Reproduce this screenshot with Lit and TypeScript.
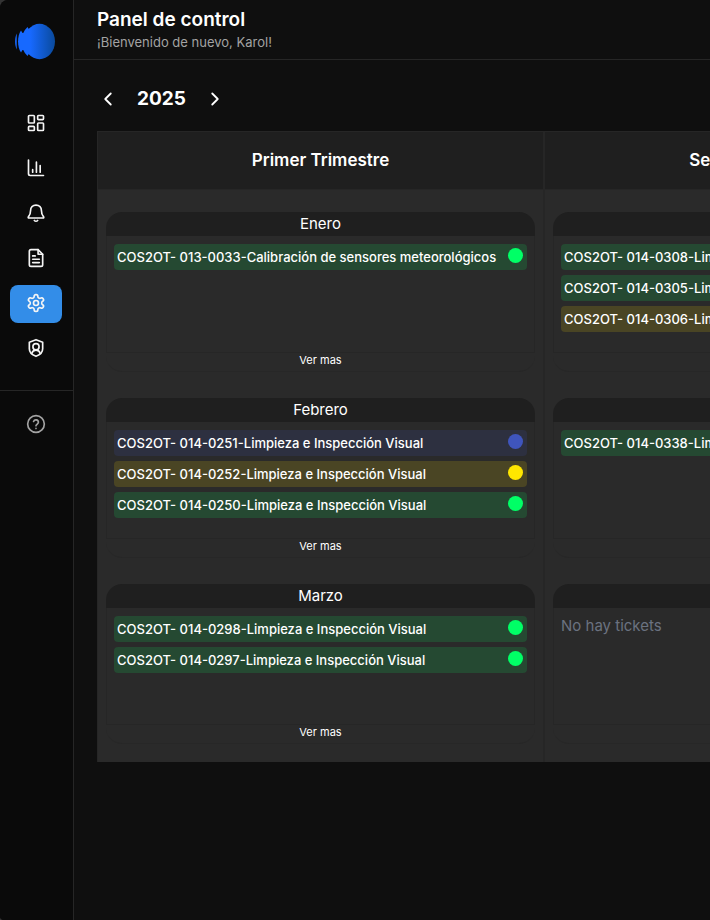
import { LitElement, html, css, svg } from "lit";
import { customElement, property, state } from "lit/decorators.js";
import { classMap } from "lit/directives/class-map.js";

type Status = "done" | "pending" | "open";
interface Ticket {
  code: string;
  title: string;
  status: Status;
}
interface Month {
  name: string;
  tickets: Ticket[];
}
interface Quarter {
  name: string;
  months: Month[];
}

const VISUAL = "Limpieza e Inspección Visual";
const ticket = (code: string, status: Status = "done", title = VISUAL): Ticket => ({ code, title, status });

const QUARTERS: Quarter[] = [
  {
    name: "Primer Trimestre",
    months: [
      { name: "Enero", tickets: [ticket("013-0033", "done", "Calibración de sensores meteorológicos")] },
      {
        name: "Febrero",
        tickets: [ticket("014-0251", "open"), ticket("014-0252", "pending"), ticket("014-0250")],
      },
      { name: "Marzo", tickets: [ticket("014-0298"), ticket("014-0297")] },
    ],
  },
  {
    name: "Segundo Trimestre",
    months: [
      {
        name: "Abril",
        tickets: [ticket("014-0308"), ticket("014-0305"), ticket("014-0306", "pending")],
      },
      { name: "Mayo", tickets: [ticket("014-0338")] },
      { name: "Junio", tickets: [] },
    ],
  },
];

const ICONS = {
  dashboard: svg`<rect x="3" y="3" width="7" height="9" rx="1"/><rect x="14" y="3" width="7" height="5" rx="1"/><rect x="14" y="12" width="7" height="9" rx="1"/><rect x="3" y="16" width="7" height="5" rx="1"/>`,
  chart: svg`<path d="M3 2.5v16.500a2 2 0 0 0 2 2h16"/><path d="M8 17v-3M12.500 17V5M17 17V9"/>`,
  bell: svg`<path d="M12 2.500c-4 0-6.500 3-6.500 6.500 0 4-.8 5.600-2.600 7.600-.5.600-.2 1.400.6 1.400h17c.8 0 1.100-.8.6-1.400-1.800-2-2.600-3.600-2.600-7.600 0-3.500-2.500-6.500-6.500-6.500z"/><path d="M10 21c1 1 3 1 4 0"/>`,
  file: svg`<path d="M14.500 2H6a2 2 0 0 0-2 2v16a2 2 0 0 0 2 2h12a2 2 0 0 0 2-2V7.500z"/><path d="M14.500 2v5.500H20M8 9.500h3M8 13.500h8M8 17.500h8"/>`,
  settings: svg`<path d="M12.220 2h-.440a2 2 0 0 0-2 2v.180a2 2 0 0 1-1 1.730l-.430.250a2 2 0 0 1-2 0l-.150-.080a2 2 0 0 0-2.730.730l-.220.380a2 2 0 0 0 .730 2.730l.150.100a2 2 0 0 1 1 1.720v.510a2 2 0 0 1-1 1.740l-.150.090a2 2 0 0 0-.730 2.730l.220.380a2 2 0 0 0 2.730.730l.150-.080a2 2 0 0 1 2 0l.430.250a2 2 0 0 1 1 1.730V20a2 2 0 0 0 2 2h.440a2 2 0 0 0 2-2v-.180a2 2 0 0 1 1-1.730l.430-.250a2 2 0 0 1 2 0l.150.080a2 2 0 0 0 2.730-.730l.220-.390a2 2 0 0 0-.730-2.730l-.150-.080a2 2 0 0 1-1-1.740v-.500a2 2 0 0 1 1-1.740l.150-.090a2 2 0 0 0 .730-2.730l-.220-.380a2 2 0 0 0-2.730-.730l-.150.080a2 2 0 0 1-2 0l-.430-.250a2 2 0 0 1-1-1.730V4a2 2 0 0 0-2-2z"/><circle cx="12" cy="12" r="3"/>`,
  shield: svg`<path d="M12 2 4 5v8c0 4.500 3.500 7.500 8 9 4.500-1.500 8-4.500 8-9V5z"/><circle cx="12" cy="10.500" r="3.700"/><path d="M7 18.500c.6-2.500 2.500-4 5-4s4.400 1.500 5 4"/>`,
  help: svg`<circle cx="12" cy="12" r="10"/><path d="M9.100 9a3 3 0 0 1 5.800 1c0 2-2.900 2.600-2.900 4M12 17.300v.2"/>`,
  previous: svg`<path d="m15 18-6-6 6-6"/>`,
  next: svg`<path d="m9 18 6-6-6-6"/>`,
};
type IconName = keyof typeof ICONS;

const icon = (name: IconName) =>
  html`<svg class="icon" viewBox="0 0 24 24" aria-hidden="true">${ICONS[name]}</svg>`;

@customElement("side-nav")
class SideNav extends LitElement {
  @state() private active: IconName = "settings";

  static styles = css`
    :host {
      display: flex;
      flex-direction: column;
      background: #0a0a0a;
      border-right: 1px solid #262626;
      box-sizing: border-box;
    }
    .logo {
      display: block;
      width: 44px;
      height: 40px;
      margin: 22px auto 43px 14px;
    }
    nav {
      display: grid;
      gap: 7px;
      padding: 0 11px 0 10px;
    }
    .foot {
      margin-top: 22px;
      padding-top: 15px;
      border-top: 1px solid #262626;
    }
    a {
      display: grid;
      place-items: center;
      box-sizing: border-box;
      height: 38px;
      padding-bottom: 2px;
      border-radius: 8px;
      color: #f5f5f5;
    }
    .active {
      background: #338de8;
    }
    .muted {
      color: #a3a3a3;
    }
    .icon {
      width: 20px;
      height: 20px;
      fill: none;
      stroke: currentColor;
      stroke-width: 2;
      stroke-linecap: round;
      stroke-linejoin: round;
    }
  `;

  private link(name: IconName, label: string) {
    return html`<a
      href="#${name}"
      aria-label=${label}
      class=${classMap({ active: this.active === name, muted: name === "help" })}
      @click=${() => (this.active = name)}
      >${icon(name)}</a
    >`;
  }

  render() {
    return html`
      <svg class="logo" viewBox="0 0 44 40" role="img" aria-label="Logo">
        <defs>
          <linearGradient id="shade" x1="0" x2="1">
            <stop offset="0.2" stop-color="#1769ff" />
            <stop offset="1" stop-color="#0a4a9c" />
          </linearGradient>
        </defs>
        <path fill="#1660e8" d="M2.800 11.500C.4 16 .4 23 2.800 27.500z" />
        <path fill="#1769ff" d="M7 8.500C3 14 3 25 7 30.500L8.500 28v-17z" />
        <path fill="#1769ff" d="M13.500 5C5.500 12 5.500 27 13.500 34L16 30V9z" />
        <path fill="#1769ff" d="M7 11h9v17H7z" />
        <ellipse cx="25.500" cy="19.500" rx="15.500" ry="17.700" fill="url(#shade)" />
      </svg>
      <nav aria-label="Principal">
        ${this.link("dashboard", "Panel")} ${this.link("chart", "Estadísticas")}
        ${this.link("bell", "Notificaciones")} ${this.link("file", "Documentos")}
        ${this.link("settings", "Configuración")} ${this.link("shield", "Seguridad")}
      </nav>
      <nav class="foot" aria-label="Soporte">${this.link("help", "Ayuda")}</nav>
    `;
  }
}

@customElement("month-card")
class MonthCard extends LitElement {
  @property({ attribute: false }) month!: Month;

  static styles = css`
    :host {
      display: block;
      height: 160px;
    }
    .card {
      display: flex;
      flex-direction: column;
      height: 100%;
      box-sizing: border-box;
      border-bottom: 1px solid #272727;
      border-radius: 16px;
    }
    h3 {
      margin: 0;
      border-radius: 16px 16px 0 0;
      background: #1f1f1f;
      font: 400 15px/24px Inter, sans-serif;
      text-align: center;
    }
    .body {
      flex: 1;
      padding: 8px 7px 0;
      border: 1px solid #262626;
      border-top: 0;
    }
    ul {
      display: grid;
      gap: 5px;
      margin: 0;
      padding: 0;
      list-style: none;
    }
    li {
      display: flex;
      justify-content: space-between;
      height: 26px;
      padding: 0 4px 0 3px;
      border-radius: 4px;
      font: 500 13px/26px Inter, sans-serif;
      white-space: nowrap;
    }
    .dot {
      width: 15px;
      height: 15px;
      margin-top: 4px;
      border-radius: 50%;
    }
    .done {
      background: #254932;
    }
    .done .dot {
      background: #00ff66;
    }
    .pending {
      background: #4a4524;
    }
    .pending .dot {
      background: #ffe600;
    }
    .open {
      background: #2d3040;
    }
    .open .dot {
      background: #3f55bd;
    }
    .empty {
      margin: 0;
      color: #6b7280;
      font: 400 15px/20px Inter, sans-serif;
    }
    button {
      align-self: center;
      height: 18px;
      padding: 0 0 5px;
      border: 0;
      background: none;
      color: #fff;
      font: 400 11px/12px Inter, sans-serif;
      cursor: pointer;
    }
  `;

  render() {
    const { name, tickets } = this.month;
    return html`<article class="card">
      <h3>${name}</h3>
      <div class="body">
        ${tickets.length
          ? html`<ul>
              ${tickets.map(
                (t) => html`<li class=${t.status}>
                  <span>COS2OT- ${t.code}-${t.title}</span><span class="dot"></span>
                </li>`,
              )}
            </ul>`
          : html`<p class="empty">No hay tickets</p>`}
      </div>
      <button type="button">Ver mas</button>
    </article>`;
  }
}

@customElement("app-root")
class AppRoot extends LitElement {
  @state() private year = 2025;

  static styles = css`
    :host {
      display: block;
      background: #333;
      color: #fff;
      font-family: Inter, sans-serif;
    }
    .shell {
      display: grid;
      grid-template-columns: 74px minmax(0, 1fr);
      min-height: 100vh;
      border-radius: 8px 0 0 4px;
      overflow: hidden;
      background: #0f0f0f;
    }
    header {
      padding: 8px 23px 7px;
      border-bottom: 1px solid #262626;
    }
    h1 {
      margin: 0;
      font: 600 19px/24px Inter, sans-serif;
    }
    .welcome {
      margin: 0;
      color: #a3a3a3;
      font-size: 13px;
      line-height: 20px;
    }
    main {
      padding: 25px 0 24px 23px;
    }
    .years {
      display: flex;
      align-items: center;
      gap: 18px;
      height: 28px;
      margin-bottom: 18px;
    }
    h2 {
      margin: 0;
      font: 700 19px/28px Inter, sans-serif;
    }
    .years button {
      display: grid;
      padding: 0;
      border: 0;
      background: none;
      color: #fff;
      cursor: pointer;
    }
    .icon {
      width: 22px;
      height: 22px;
      fill: none;
      stroke: currentColor;
      stroke-width: 2;
      stroke-linecap: round;
      stroke-linejoin: round;
    }
    .board {
      display: grid;
      grid-auto-flow: column;
      grid-auto-columns: minmax(447px, 1fr);
      overflow-x: auto;
      scrollbar-width: none;
    }
    .quarter {
      background: #2a2a2a;
      border: 1px solid #262626;
      border-bottom: 0;
    }
    .quarter h2 {
      border-bottom: 1px solid #262626;
      background: #1f1f1f;
      font-size: 17px;
      font-weight: 600;
      line-height: 57px;
      text-align: center;
    }
    .months {
      display: grid;
      gap: 26px;
      padding: 22px 8px 18px;
    }
  `;

  render() {
    return html`<div class="shell">
      <side-nav></side-nav>
      <div>
        <header>
          <h1>Panel de control</h1>
          <p class="welcome">¡Bienvenido de nuevo, Karol!</p>
        </header>
        <main>
          <div class="years">
            <button type="button" aria-label="Año anterior" @click=${() => this.year--}>${icon("previous")}</button>
            <h2>${this.year}</h2>
            <button type="button" aria-label="Año siguiente" @click=${() => this.year++}>${icon("next")}</button>
          </div>
          <div class="board">
            ${QUARTERS.map(
              (q) => html`<section class="quarter">
                <h2>${q.name}</h2>
                <div class="months">
                  ${q.months.map((m) => html`<month-card .month=${m}></month-card>`)}
                </div>
              </section>`,
            )}
          </div>
        </main>
      </div>
    </div>`;
  }
}
